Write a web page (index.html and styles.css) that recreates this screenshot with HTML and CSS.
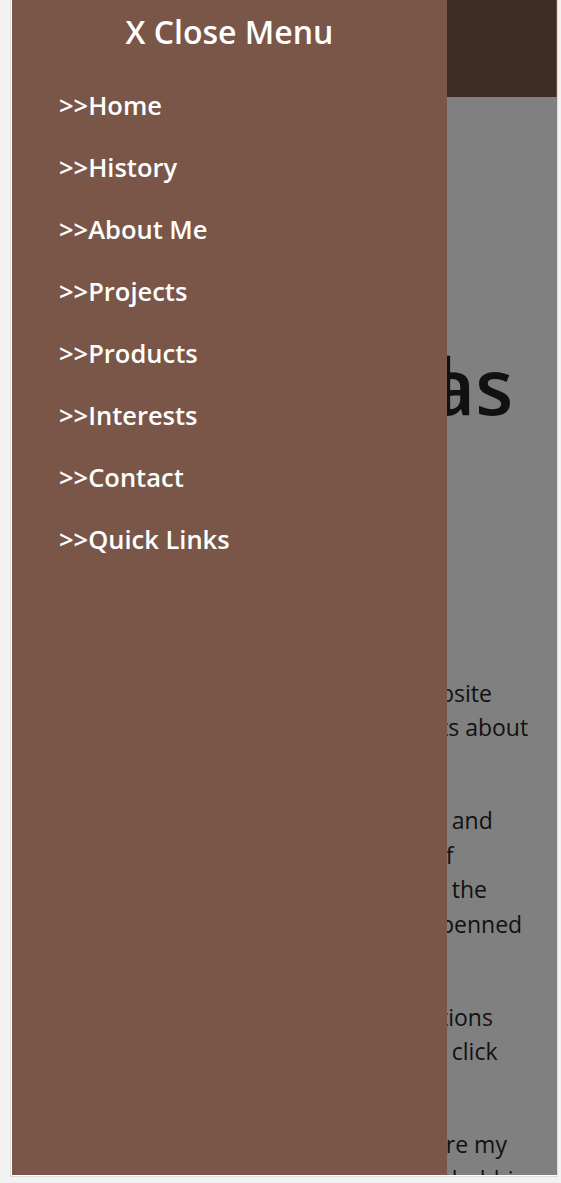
FILE: index.html
```html
<!DOCTYPE html>
<html lang="en">
<head>
<meta charset="utf-8">
<title>Menu</title>
<link rel="stylesheet" href="styles.css">
</head>
<body>
<div class="frame">
  <header class="topbar"></header>
  <main class="content">
    <h1 class="heading ln"><span class="pre">I am Nichol</span><span class="tail">as</span></h1>
    <p class="para">
      <span class="ln"><span class="pre">This is my we</span><span class="tail">bsite</span></span>
      <span class="ln"><span class="pre">with thought</span><span class="tail">ts about</span></span>
    </p>
    <p class="para">
      <span class="ln"><span class="pre">My life and all</span><span class="tail">l and</span></span>
      <span class="ln"><span class="pre">my family, i</span><span class="tail">if</span></span>
      <span class="ln"><span class="pre">you like, al</span><span class="tail">l the</span></span>
      <span class="ln"><span class="pre">things that hap</span><span class="tail">penned</span></span>
    </p>
    <p class="para">
      <span class="ln"><span class="pre">For any ques</span><span class="tail">tions</span></span>
      <span class="ln"><span class="pre">you wil</span><span class="tail">l click</span></span>
    </p>
    <p class="para">
      <span class="ln"><span class="pre">Projects that insp</span><span class="tail">ire my</span></span>
      <span class="ln"><span class="pre">work and al</span><span class="tail">l hobbies</span></span>
    </p>
  </main>
  <nav class="menu">
    <a class="close" href="#">X Close Menu</a>
    <ul class="menu-list">
      <li><a href="#">&gt;&gt;Home</a></li>
      <li><a href="#">&gt;&gt;History</a></li>
      <li><a href="#">&gt;&gt;About Me</a></li>
      <li><a href="#">&gt;&gt;Projects</a></li>
      <li><a href="#">&gt;&gt;Products</a></li>
      <li><a href="#">&gt;&gt;Interests</a></li>
      <li><a href="#">&gt;&gt;Contact</a></li>
      <li><a href="#">&gt;&gt;Quick Links</a></li>
    </ul>
  </nav>
</div>
</body>
</html>
```

FILE: styles.css
```css
html, body {
  margin: 0;
  padding: 0;
}

body {
  background: #f2f2f2;
  font-family: "Open Sans", "DejaVu Sans", sans-serif;
  height: 1183px;
  overflow: hidden;
}

.frame {
  position: relative;
  margin-left: 11px;
  width: 545px;
  height: 1175px;
  border-left: 1px solid #ffffff;
  border-bottom: 1px solid #ffffff;
  box-shadow: 0 0 0 1px #dcdcdc;
  background: #808080;
  overflow: hidden;
}

.topbar {
  height: 97px;
  background: #3e2c25;
  border-right: 1px solid #6e4f43;
  box-sizing: border-box;
}

.content {
  padding: 242px 0 0 20px;
  color: #111111;
}

.ln {
  display: flex;
  white-space: pre;
}

.pre {
  flex: 0 0 auto;
  width: 408px;
  text-align: right;
}

.tail {
  flex: 0 0 auto;
}

.heading {
  margin: 0 0 243px 0;
  font-size: 78px;
  font-weight: 600;
  line-height: 93.6px;
}

.heading .pre {
  width: 398px;
}

.para {
  margin: 0 0 58.5px 0;
  font-size: 23px;
  line-height: 34.5px;
  font-weight: 400;
}

.menu {
  position: absolute;
  top: 0;
  left: 0;
  width: 435px;
  height: 100%;
  background: #7a5648;
  display: flex;
  flex-direction: column;
  padding-top: 12px;
  box-sizing: border-box;
}

.close {
  display: block;
  text-align: center;
  color: #ffffff;
  text-decoration: none;
  font-size: 32px;
  line-height: 40px;
  font-weight: 600;
}

.menu-list {
  list-style: none;
  margin: 22px 0 0 0;
  padding: 0 0 0 47px;
}

.menu-list li {
  height: 62px;
  line-height: 62px;
}

.menu-list a {
  color: #ffffff;
  text-decoration: none;
  font-size: 25.5px;
  font-weight: 600;
}
```
